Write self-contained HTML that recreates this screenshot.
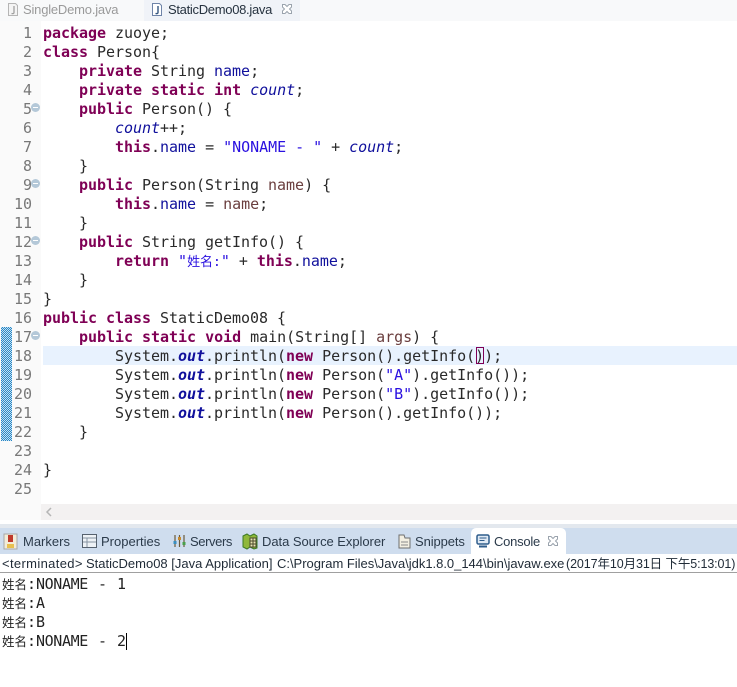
<!DOCTYPE html>
<html><head><meta charset="utf-8">
<style>
html,body{margin:0;padding:0;background:#fff;}
#r{position:relative;width:737px;height:687px;overflow:hidden;background:#fff;font-family:"Liberation Sans","Noto Sans CJK SC",sans-serif;}
.a{position:absolute;white-space:pre;}
.ln{position:absolute;left:0;width:32px;text-align:right;font:15px/19px "DejaVu Sans Mono",monospace;color:#787878;letter-spacing:-.03px;}
.c{position:absolute;left:43px;font:15px/19px "DejaVu Sans Mono","Noto Sans CJK SC",monospace;letter-spacing:-.03px;color:#2a2a2a;white-space:pre;}
b{color:#7f0055;font-weight:bold;}
.f{color:#10109c;}
.i{color:#10109c;font-style:italic;}
.o{color:#10109c;font-style:italic;font-weight:bold;}
.s{color:#2a10e0;}
.v{color:#6a3e3e;}
.t{position:absolute;font-size:13px;line-height:16px;color:#2b3a4a;white-space:pre;top:534px;}
.m{position:absolute;left:2px;font:15px/19px "DejaVu Sans Mono","Noto Sans CJK SC",monospace;color:#222;white-space:pre;}
.fold{position:absolute;left:31px;width:9px;height:9px;border-radius:50%;background:#b4c8d8;}
.fold:after{content:"";position:absolute;left:2px;top:4px;width:5px;height:1px;background:#fff;}
.h{font-size:12.500px;}
.p{position:absolute;top:0;}
svg{position:absolute;}
</style></head><body><div id="r">
<div class="a" style="left:0;top:0;width:737px;height:21px;background:#f8f9fa"></div>
<div class="a" style="left:144px;top:0;width:156px;height:21px;background:#f0f3f8"></div>
<svg style="left:6px;top:2px" width="14" height="15" viewBox="0 0 14 15"><path d="M2.500 1.500h7l2 2v10h-9z" fill="#f4f4f4" stroke="#b5b5b5"/><path d="M8 4v6.500q0 1.500-2.500 1" fill="none" stroke="#a0a0a0" stroke-width="1.300"/></svg>
<div class="a" style="left:23px;top:2px;font-size:13px;line-height:16px;color:#9a9a9a;letter-spacing:-.2px">SingleDemo.java</div>
<svg style="left:150px;top:2px" width="14" height="15" viewBox="0 0 14 15"><path d="M2.500 1.500h7l2 2v10h-9z" fill="#fff" stroke="#6f84a8"/><path d="M8 4v6.500q0 1.500-2.500 1" fill="none" stroke="#34557f" stroke-width="1.400"/></svg>
<div class="a" style="left:168px;top:2px;font-size:13px;line-height:16px;color:#26323f;letter-spacing:-.3px">StaticDemo08.java</div>
<svg style="left:281px;top:3px" width="12" height="12" viewBox="0 0 12 12"><path d="M1.500 1.500h2.500l2 2 2-2h2.500v2.500l-2 2 2 2v2.500h-2.500l-2-2-2 2h-2.500v-2.500l2-2-2-2z" fill="#fff" stroke="#9aa3ad"/></svg>

<div class="a" style="left:0;top:21px;width:41px;height:499px;background:#fafafa"></div>
<div class="a" style="left:43px;top:346px;width:694px;height:19px;background:#e8f2fe"></div>
<div class="a" style="left:1px;top:327px;width:11px;height:114px;background:repeating-conic-gradient(#2a86c4 0 25%,#c4e2f4 0 50%);background-size:2px 2px"></div>

<div class="ln" style="top:24px">1</div><div class="c" style="top:24px"><b>package</b> zuoye;</div>
<div class="ln" style="top:43px">2</div><div class="c" style="top:43px"><b>class</b> Person{</div>
<div class="ln" style="top:62px">3</div><div class="c" style="top:62px">    <b>private</b> String <span class="f">name</span>;</div>
<div class="ln" style="top:81px">4</div><div class="c" style="top:81px">    <b>private</b> <b>static</b> <b>int</b> <span class="i">count</span>;</div>
<div class="ln" style="top:100px">5</div><div class="c" style="top:100px">    <b>public</b> Person() {</div>
<div class="ln" style="top:119px">6</div><div class="c" style="top:119px">        <span class="i">count</span>++;</div>
<div class="ln" style="top:138px">7</div><div class="c" style="top:138px">        <b>this</b>.<span class="f">name</span> = <span class="s">"NONAME - "</span> + <span class="i">count</span>;</div>
<div class="ln" style="top:157px">8</div><div class="c" style="top:157px">    }</div>
<div class="ln" style="top:176px">9</div><div class="c" style="top:176px">    <b>public</b> Person(String <span class="v">name</span>) {</div>
<div class="ln" style="top:195px">10</div><div class="c" style="top:195px">        <b>this</b>.<span class="f">name</span> = <span class="v">name</span>;</div>
<div class="ln" style="top:214px">11</div><div class="c" style="top:214px">    }</div>
<div class="ln" style="top:233px">12</div><div class="c" style="top:233px">    <b>public</b> String getInfo() {</div>
<div class="ln" style="top:252px">13</div><div class="c" style="top:252px">        <b>return</b> <span class="s">"<span style="font-size:13px">姓名:</span>"</span> + <b>this</b>.<span class="f">name</span>;</div>
<div class="ln" style="top:271px">14</div><div class="c" style="top:271px">    }</div>
<div class="ln" style="top:290px">15</div><div class="c" style="top:290px">}</div>
<div class="ln" style="top:309px">16</div><div class="c" style="top:309px"><b>public</b> <b>class</b> StaticDemo08 {</div>
<div class="ln" style="top:328px">17</div><div class="c" style="top:328px">    <b>public</b> <b>static</b> <b>void</b> main(String[] <span class="v">args</span>) {</div>
<div class="ln" style="top:347px">18</div><div class="c" style="top:347px">        System.<span class="o">out</span>.println(<b>new</b> Person().getInfo());</div>
<div class="ln" style="top:366px">19</div><div class="c" style="top:366px">        System.<span class="o">out</span>.println(<b>new</b> Person(<span class="s">"A"</span>).getInfo());</div>
<div class="ln" style="top:385px">20</div><div class="c" style="top:385px">        System.<span class="o">out</span>.println(<b>new</b> Person(<span class="s">"B"</span>).getInfo());</div>
<div class="ln" style="top:404px">21</div><div class="c" style="top:404px">        System.<span class="o">out</span>.println(<b>new</b> Person().getInfo());</div>
<div class="ln" style="top:423px">22</div><div class="c" style="top:423px">    }</div>
<div class="ln" style="top:442px">23</div>
<div class="ln" style="top:461px">24</div><div class="c" style="top:461px">}</div>
<div class="ln" style="top:480px">25</div>

<div class="fold" style="top:103px"></div>
<div class="fold" style="top:179px"></div>
<div class="fold" style="top:236px"></div>
<div class="fold" style="top:331px"></div>
<div class="a" style="left:476px;top:347px;width:8px;height:17px;border:1px solid #7f0055;box-sizing:border-box"></div>

<div class="a" style="left:41px;top:504px;width:696px;height:16px;background:#f3f1f1"></div>
<svg style="left:45px;top:507px" width="8" height="10" viewBox="0 0 8 10"><path d="M6 1L2 5l4 4" fill="none" stroke="#b5b5b5" stroke-width="1.500"/></svg>

<div class="a" style="left:0;top:520px;width:737px;height:5px;background:#fff"></div>
<div class="a" style="left:0;top:524px;width:737px;height:4px;background:#e3e8ee"></div>
<div class="a" style="left:0;top:528px;width:737px;height:26px;background:#cfddee"></div>
<div class="a" style="left:471px;top:528px;width:95px;height:26px;background:#fff;border-radius:5px 5px 0 0"></div>

<svg style="left:3px;top:533px" width="15" height="17" viewBox="0 0 15 17"><rect x="1" y="1" width="13" height="15" fill="#f3ecd8" stroke="#a8a8a8"/><rect x="5" y="2" width="5" height="7" fill="#c0392b"/><rect x="4" y="11" width="7" height="4" fill="#e8c050"/></svg>
<div class="t" style="left:23px">Markers</div>
<svg style="left:82px;top:534px" width="15" height="14" viewBox="0 0 15 14"><rect x=".5" y=".5" width="14" height="13" fill="#eef2f6" stroke="#56616e"/><path d="M1 4h13M5 4v9M1 8h13" stroke="#8794a3" fill="none"/></svg>
<div class="t" style="left:101px">Properties</div>
<svg style="left:172px;top:534px" width="15" height="14" viewBox="0 0 15 14"><path d="M3 1v12M7.500 1v12M12 1v12" stroke="#6b5a3a" stroke-width="1.200"/><rect x="1.500" y="7" width="3" height="3" fill="#3a8fc0"/><rect x="6" y="3" width="3" height="3" fill="#c98a2b"/><rect x="10.500" y="8" width="3" height="3" fill="#4aa04a"/></svg>
<div class="t" style="left:190px;letter-spacing:-.4px">Servers</div>
<svg style="left:242px;top:533px" width="16" height="17" viewBox="0 0 16 17"><path d="M1 3l4-2 3 2 4-2 3 2v12l-3 1-4-2-3 2-4-2z" fill="#8fb83a" stroke="#3c7a25"/><path d="M8 5h6v9H8z" fill="#e8e4b0" stroke="#4a4a2a"/><path d="M8 8h6M8 11h6M11 5v9" stroke="#4a4a2a"/></svg>
<div class="t" style="left:262px;letter-spacing:-.05px">Data Source Explorer</div>
<svg style="left:397px;top:534px" width="15" height="15" viewBox="0 0 15 15"><path d="M2 1h5l1 3h5v10H2z" fill="#f3efe2" stroke="#6e6e6e"/><path d="M4 8h7M4 11h7" stroke="#8a8a8a"/></svg>
<div class="t" style="left:415px;letter-spacing:-.1px">Snippets</div>
<svg style="left:476px;top:534px" width="14" height="14" viewBox="0 0 14 14"><rect x="1" y="1" width="12" height="9" rx="1.500" fill="#dfe9f4" stroke="#2f5d8c" stroke-width="1.500"/><path d="M3.500 4h7M3.500 6.500h5" stroke="#2f5d8c"/><path d="M3 12.500h8" stroke="#2f5d8c" stroke-width="2"/></svg>
<div class="t" style="left:494px;letter-spacing:-.25px">Console</div>
<svg style="left:547px;top:535px" width="12" height="12" viewBox="0 0 12 12"><path d="M1.500 1.500h2.500l2 2 2-2h2.500v2.500l-2 2 2 2v2.500h-2.500l-2-2-2 2h-2.500v-2.500l2-2-2-2z" fill="#fff" stroke="#9aa3ad"/></svg>

<div class="a" style="left:2px;top:556px;font-size:13px;line-height:16px;color:#1f2a36;letter-spacing:.35px">&lt;terminated&gt;</div>
<div class="a" style="left:86px;top:556px;font-size:13px;line-height:16px;color:#1f2a36">StaticDemo08 [Java Application]</div>
<div class="a" style="left:277px;top:556px;font-size:13px;line-height:16px;color:#1f2a36;letter-spacing:-.02px">C:\Program Files\Java\jdk1.8.0_144\bin\javaw.exe</div>
<div class="a" style="left:566px;top:556px;font-size:12.500px;line-height:16px;color:#1f2a36;letter-spacing:-.1px">(2017年10月31日 下午5:13:01)</div>
<div class="a" style="left:0;top:572px;width:737px;height:1px;background:#a0a0a0"></div>

<div class="m" style="top:575px"><span class="h">姓名</span>:<span style="letter-spacing:-.4px">NONAME</span></div>
<div class="m" style="top:575px;left:98px">-</div>
<div class="m" style="top:575px;left:117px">1</div>
<div class="m" style="top:594px"><span class="h">姓名</span>:A</div>
<div class="m" style="top:613px"><span class="h">姓名</span>:B</div>
<div class="m" style="top:632px"><span class="h">姓名</span>:<span style="letter-spacing:-.4px">NONAME</span></div>
<div class="m" style="top:632px;left:98px">-</div>
<div class="m" style="top:632px;left:117px">2</div>
<div class="a" style="left:126px;top:633px;width:1px;height:17px;background:#000"></div>
</div></body></html>
